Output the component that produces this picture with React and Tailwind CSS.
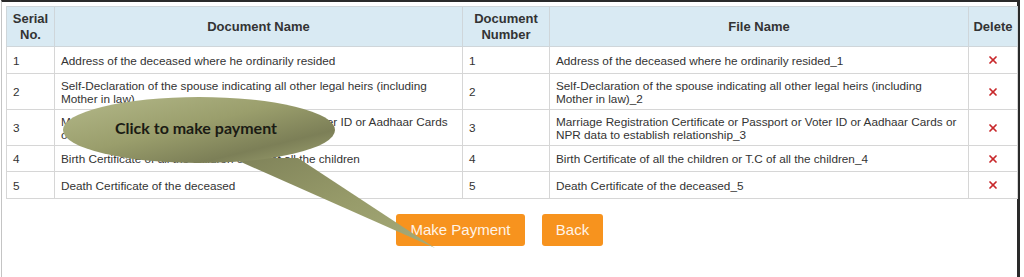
import React from "react";
import { X } from "lucide-react";

const rows = [
  {
    no: "1",
    name: "Address of the deceased where he ordinarily resided",
    file: "Address of the deceased where he ordinarily resided_1",
    h: "h-[27px]",
  },
  {
    no: "2",
    name: ["Self-Declaration of the spouse indicating all other legal heirs (including", "Mother in law)"],
    file: ["Self-Declaration of the spouse indicating all other legal heirs (including", "Mother in law)_2"],
    h: "h-[36px]",
  },
  {
    no: "3",
    name: ["Marriage Registration Certificate or Passport or Voter ID or Aadhaar Cards", "or NPR data to establish relationship"],
    file: ["Marriage Registration Certificate or Passport or Voter ID or Aadhaar Cards or", "NPR data to establish relationship_3"],
    h: "h-[36px]",
  },
  {
    no: "4",
    name: "Birth Certificate of all the children or T.C of all the children",
    file: "Birth Certificate of all the children or T.C of all the children_4",
    h: "h-[26px]",
  },
  {
    no: "5",
    name: "Death Certificate of the deceased",
    file: "Death Certificate of the deceased_5",
    h: "h-[27px]",
  },
];

const Lines = ({ text }) =>
  Array.isArray(text) ? (
    <>
      {text[0]}
      <br />
      {text[1]}
    </>
  ) : (
    text
  );

const Callout = () => (
  <div className="absolute left-0 top-0 w-[1024px] h-[277px] pointer-events-none">
    <svg width="1024" height="277" className="absolute left-0 top-0">
      <defs>
        <linearGradient id="blob" x1="0" y1="0" x2="1" y2="1">
          <stop offset="0" stopColor="#b4b98a" />
          <stop offset="0.45" stopColor="#9a9e6c" />
          <stop offset="0.75" stopColor="#7c7f57" />
          <stop offset="1" stopColor="#a0a572" />
        </linearGradient>
        <linearGradient id="tail" x1="0" y1="0" x2="1" y2="1">
          <stop offset="0" stopColor="#7f8259" />
          <stop offset="0.5" stopColor="#969a69" />
          <stop offset="1" stopColor="#a6ab79" />
        </linearGradient>
      </defs>
      <polygon points="232,158 298,158 435,248" fill="url(#tail)" />
      <ellipse cx="199" cy="130" rx="136" ry="33" fill="url(#blob)" />
    </svg>
    <div className="absolute left-[63px] top-[97px] w-[272px] h-[66px] flex items-center justify-center pr-[6px] pb-[4px]">
      <span className="font-['Lato',sans-serif] font-bold text-[16px] text-[#1b1b14]">
        Click to make payment
      </span>
    </div>
  </div>
);

const App = () => {
  return (
    <div className="relative w-[1024px] h-[277px] bg-white overflow-hidden font-['Liberation_Sans',Arial,sans-serif]">
      <div className="ml-[1px] w-[1019px] h-[277px] border-t-2 border-t-[#2a2a2a] border-l border-l-[#c4c4c4] border-r-[3px] border-r-[#2a2a2a] pl-[4px] pt-[4px]">
        <table className="table-fixed border-collapse w-[1011px] text-[11.75px] leading-[13px] text-[#333]">
          <colgroup>
            <col className="w-[48px]" />
            <col className="w-[408px]" />
            <col className="w-[87px]" />
            <col className="w-[419px]" />
            <col className="w-[49px]" />
          </colgroup>
          <thead>
            <tr className="h-[40px] bg-[#d9eaf3] text-[13px] leading-[16px] font-bold">
              <th className="border border-[#cfd6da] text-center">Serial<br />No.</th>
              <th className="border border-[#cfd6da] text-center">Document Name</th>
              <th className="border border-[#cfd6da] text-center">Document<br />Number</th>
              <th className="border border-[#cfd6da] text-center">File Name</th>
              <th className="border border-[#cfd6da] text-center">Delete</th>
            </tr>
          </thead>
          <tbody>
            {rows.map((r) => (
              <tr key={r.no} className={r.h}>
                <td className="border border-[#d6d6d6] px-[6px] py-0 align-middle">{r.no}</td>
                <td className="border border-[#d6d6d6] px-[6px] py-0 align-middle whitespace-nowrap"><Lines text={r.name} /></td>
                <td className="border border-[#d6d6d6] px-[6px] py-0 align-middle">{r.no}</td>
                <td className="border border-[#d6d6d6] px-[6px] py-0 align-middle whitespace-nowrap"><Lines text={r.file} /></td>
                <td className="border border-[#d6d6d6] py-0 align-middle">
                  <div className="flex justify-center">
                    <X className="w-[12px] h-[12px] text-[#c8282b]" strokeWidth={3.5} />
                  </div>
                </td>
              </tr>
            ))}
          </tbody>
        </table>
        <div className="flex gap-[17px] pl-[390px] mt-[15px]">
          <button className="w-[129px] h-[32px] rounded-[3px] bg-[#f7931e] text-[#fff4e8] text-[15px]">
            Make Payment
          </button>
          <button className="w-[61px] h-[32px] rounded-[3px] bg-[#f7931e] text-[#fff4e8] text-[15px]">
            Back
          </button>
        </div>
      </div>
      <Callout />
    </div>
  );
};

export default App;
